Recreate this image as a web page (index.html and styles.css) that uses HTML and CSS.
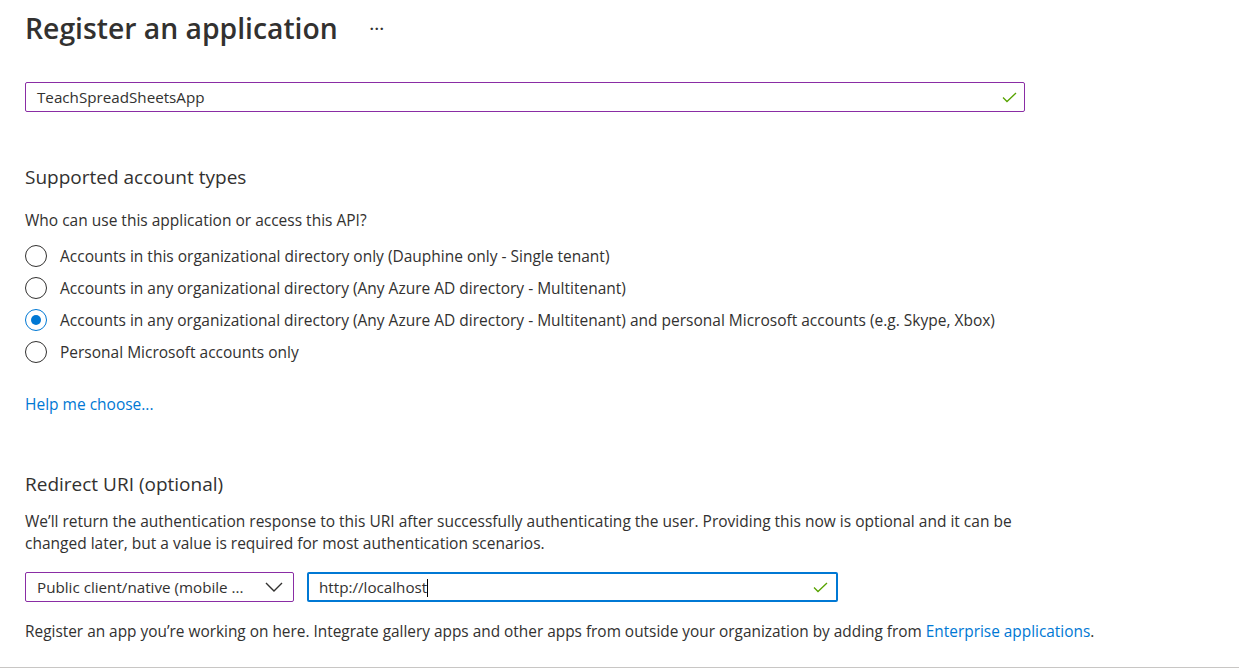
FILE: index.html
```html
<!DOCTYPE html>
<html lang="en">
<head>
<meta charset="utf-8">
<title>Register an application</title>
<link rel="stylesheet" href="styles.css">
</head>
<body>
<main class="page">
  <header class="title-row">
    <h1 class="title">Register an application</h1>
    <span class="more">···</span>
  </header>

  <div class="textbox textbox-name">
    <span class="textbox-value">TeachSpreadSheetsApp</span>
    <svg class="check" width="15" height="11" viewBox="0 0 15 11"><path d="M1 5.5 L5 9.5 L14 1" fill="none" stroke="#57a300" stroke-width="1.3"/></svg>
  </div>

  <section class="section section-accounts">
    <h2 class="section-title">Supported account types</h2>
    <p class="question">Who can use this application or access this API?</p>
    <ul class="radios">
      <li class="radio-row"><span class="radio"></span><span>Accounts in this organizational directory only (Dauphine only - Single tenant)</span></li>
      <li class="radio-row"><span class="radio"></span><span>Accounts in any organizational directory (Any Azure AD directory - Multitenant)</span></li>
      <li class="radio-row"><span class="radio radio-on"></span><span>Accounts in any organizational directory (Any Azure AD directory - Multitenant) and personal Microsoft accounts (e.g. Skype, Xbox)</span></li>
      <li class="radio-row"><span class="radio"></span><span>Personal Microsoft accounts only</span></li>
    </ul>
    <a class="link help" href="#">Help me choose...</a>
  </section>

  <section class="section section-redirect">
    <h2 class="section-title">Redirect URI (optional)</h2>
    <p class="desc">We’ll return the authentication response to this URI after successfully authenticating the user. Providing this now is optional and it can be changed later, but a value is required for most authentication scenarios.</p>
    <div class="uri-row">
      <div class="select">
        <span class="select-value">Public client/native (mobile ...</span>
        <svg class="chevron" width="18" height="10" viewBox="0 0 18 10"><path d="M1 1 L9 9 L17 1" fill="none" stroke="#323130" stroke-width="1.4"/></svg>
      </div>
      <div class="textbox textbox-uri">
        <span class="textbox-value">http://localhost<span class="caret"></span></span>
        <svg class="check" width="15" height="11" viewBox="0 0 15 11"><path d="M1 5.5 L5 9.5 L14 1" fill="none" stroke="#57a300" stroke-width="1.3"/></svg>
      </div>
    </div>
    <p class="note">Register an app you’re working on here. Integrate gallery apps and other apps from outside your organization by adding from <a class="link" href="#">Enterprise applications</a>.</p>
  </section>
</main>
<div class="bottom-rule"></div>
</body>
</html>
```

FILE: styles.css
```css
html, body {
  margin: 0;
  padding: 0;
  background: #ffffff;
}

body {
  font-family: "Open Sans", "Noto Sans", "Liberation Sans", sans-serif;
  font-size: 15.5px;
  color: #323130;
  overflow: hidden;
}

.page {
  padding: 10px 0 0 25px;
}

.title-row {
  display: flex;
  align-items: center;
  height: 36px;
}

.title {
  margin: 0;
  font-size: 28.3px;
  line-height: 36px;
  font-weight: 600;
  color: #323130;
}

.more {
  margin-left: 32px;
  font-size: 14px;
  letter-spacing: 1px;
  color: #323130;
  font-weight: 700;
}

.textbox {
  display: flex;
  align-items: center;
  box-sizing: border-box;
  height: 30px;
  border: 1px solid #8a2da5;
  border-radius: 2px;
  padding: 0 7px 0 11px;
}

.textbox-value {
  flex: 1;
  white-space: nowrap;
  line-height: 20px;
  font-size: 15.2px;
}

.textbox-name {
  margin-top: 36px;
  width: 1000px;
}

.check {
  flex: none;
}

.section-title {
  margin: 0;
  font-size: 19px;
  line-height: 28px;
  font-weight: 400;
}

.section-accounts {
  margin-top: 51px;
}

.question {
  margin: 19px 0 0;
  line-height: 20px;
}

.radios {
  list-style: none;
  margin: 10px 0 0;
  padding: 0;
}

.radio-row {
  display: flex;
  align-items: center;
  height: 32px;
  line-height: 20px;
}

.radio {
  box-sizing: border-box;
  width: 22px;
  height: 22px;
  border: 1px solid #323130;
  border-radius: 50%;
  margin-right: 13px;
  flex: none;
  display: flex;
  align-items: center;
  justify-content: center;
}

.radio-on {
  border-color: #0078d4;
}

.radio-on::after {
  content: "";
  width: 10px;
  height: 10px;
  border-radius: 50%;
  background: #0078d4;
}

.link {
  color: #0078d4;
  text-decoration: none;
}

.help {
  display: block;
  margin-top: 26px;
  line-height: 20px;
}

.section-redirect {
  margin-top: 56px;
}

.desc {
  margin: 12px 0 0;
  width: 1000px;
  line-height: 22px;
}

.uri-row {
  display: flex;
  gap: 13px;
  margin-top: 18px;
}

.select {
  display: flex;
  align-items: center;
  box-sizing: border-box;
  width: 269px;
  height: 30px;
  border: 1px solid #8a2da5;
  border-radius: 2px;
  padding: 0 10px 0 11px;
}

.select-value {
  flex: 1;
  white-space: nowrap;
  overflow: hidden;
  font-size: 15.2px;
}

.chevron {
  flex: none;
}

.textbox-uri {
  width: 531px;
  border: 2px solid #0078d4;
  padding: 0 8px 0 10px;
}

.caret {
  display: inline-block;
  width: 1px;
  height: 18px;
  background: #000;
  vertical-align: -4px;
}

.note {
  margin: 20px 0 0;
  line-height: 20px;
  font-size: 15.4px;
}

.bottom-rule {
  margin-top: 25px;
  height: 1px;
  background: #c8c6c4;
}
```
